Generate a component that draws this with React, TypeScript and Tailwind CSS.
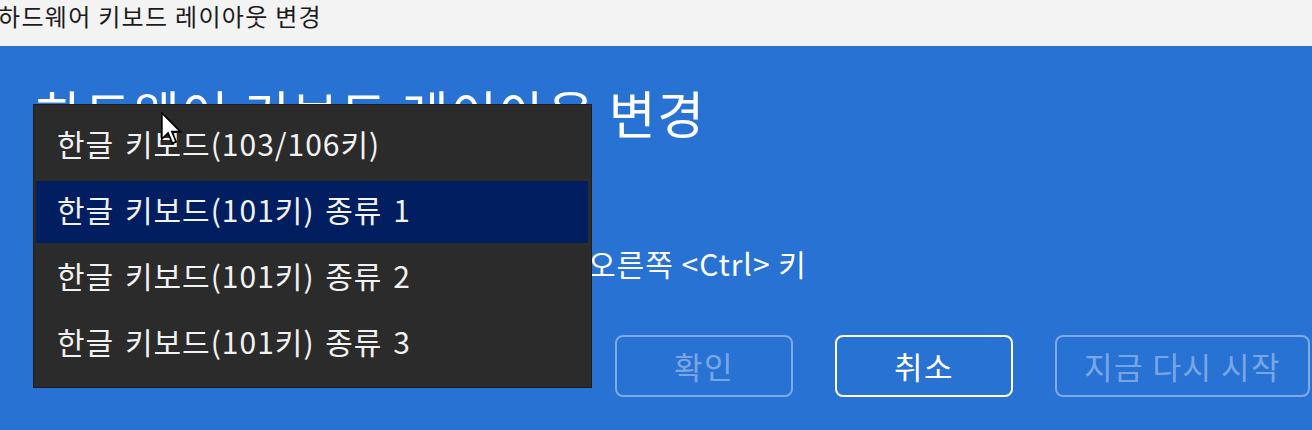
const items = [
  '한글 키보드(103/106키)',
  '한글 키보드(101키) 종류 1',
  '한글 키보드(101키) 종류 2',
  '한글 키보드(101키) 종류 3',
]

function Cursor() {
  return (
    <svg
      className="absolute left-[161px] top-[66px]"
      width="21"
      height="33"
      viewBox="0 0 12.5 19.5"
    >
      <path
        d="M0.5 0.5 L0.5 16 L4.2 12.4 L6.8 18.6 L9 17.7 L6.5 11.6 L11.5 11.6 Z"
        fill="#fff"
        stroke="#000"
        strokeWidth="1"
        strokeLinejoin="miter"
      />
    </svg>
  )
}

export default function App() {
  return (
    <div className="h-[430px] w-[1312px] overflow-hidden font-['Noto_Sans_CJK_KR','Noto_Sans',sans-serif]">
      <div className="h-[46px] bg-[#f3f3f3] text-[24px] leading-[32px] tracking-[1.3px] text-[#1b1b1b]">
        <span className="ml-[-2px]">하드웨어 키보드 레이아웃 변경</span>
      </div>

      <div className="relative h-[384px] bg-[#2872d4] px-[36px] pt-[38px] text-white">
        <h1 className="whitespace-nowrap text-[51px] leading-[56px] tracking-[1.6px]">
          하드웨어 키보드 레이아웃 변경
        </h1>

        <div className="mt-[40px] flex text-[30px] leading-[36px] tracking-[1px]">
          <div className="w-[552px]">키보드 종류:</div>
        </div>
        <div className="mt-[29px] flex text-[30px] leading-[36px] tracking-[1px]">
          <div className="w-[552px] shrink-0">한자 키:</div>
          <div className="whitespace-nowrap">오른쪽 &lt;Ctrl&gt; 키</div>
        </div>

        <div className="ml-[579px] mt-[54px] flex gap-[42px] text-[31px] tracking-[1.5px]">
          <button className="flex h-[62px] w-[178px] shrink-0 items-center justify-center rounded-[8px] border-2 border-white/40 text-white/40">
            확인
          </button>
          <button className="flex h-[62px] w-[178px] shrink-0 items-center justify-center rounded-[8px] border-2 border-white text-white">
            취소
          </button>
          <button className="flex h-[62px] w-[255px] shrink-0 items-center justify-center whitespace-nowrap rounded-[8px] border-2 border-white/40 text-white/40">
            지금 다시 시작
          </button>
        </div>

        <div className="absolute left-[33px] top-[58px] w-[559px] border border-[#1c1c1c] bg-[#2b2b2b] pt-[8px] pb-[10px]">
          {items.map((t, i) => (
            <div key={t} className="h-[66px] py-[2px] pl-[2px] pr-[3px]">
              <div
                className={
                  'flex h-full items-center whitespace-nowrap pb-[6px] pl-[21px] text-[30px] tracking-[1px] [word-spacing:3px] text-[#f2f2f2] ' +
                  (i === 1 ? 'bg-[#011e60]' : '')
                }
              >
                {t}
              </div>
            </div>
          ))}
        </div>

        <Cursor />
      </div>
    </div>
  )
}
